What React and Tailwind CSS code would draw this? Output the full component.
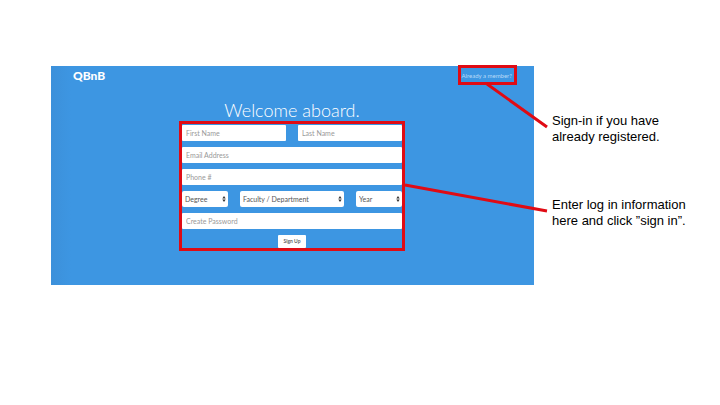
import React from "react";

const field =
  "block h-4 w-full min-w-0 rounded-[1px] bg-white px-1 text-[7px] leading-4 text-gray-600 outline-none placeholder:text-[#999]";

function Field({ label, type = "text" }) {
  return <input type={type} aria-label={label} placeholder={label} className={field} />;
}

function Select({ label, className }) {
  return (
    <div className={`relative ${className}`}>
      <select
        aria-label={label}
        className="block h-4 w-full appearance-none rounded-[2px] bg-white px-[3px] text-[7px] leading-4 text-[#555] outline-none"
      >
        <option>{label}</option>
      </select>
      <svg viewBox="0 0 4 6" className="pointer-events-none absolute top-[5px] right-[2px] h-[6px] w-1 fill-[#333]">
        <path d="M2 0 3.7 2.4H.3zM2 6 .3 3.6h3.4z" />
      </svg>
    </div>
  );
}

function Callout({ className }) {
  return <span aria-hidden="true" className={`pointer-events-none absolute border-3 border-[#e00b14] ${className}`} />;
}

export default function App() {
  return (
    <div className="flex min-h-screen items-start bg-white pt-[66px] pl-[51px] font-['Lato',sans-serif]">
      <section className="relative min-w-0 flex-1 bg-[linear-gradient(to_right,#3c90da,#3d96e2_20px)] pb-[37px]">
        <header className="flex items-start justify-between pt-[3px] pr-[22px] pl-[22px]">
          <span className="text-[12px] leading-[14px] font-black text-white">QBnB</span>
          <a href="#sign-in" className="relative text-[6px] leading-[14px] font-normal text-[#b9daf7]">
            Already a member?
            <Callout className="-top-1 -right-[5px] -bottom-[2px] -left-1" />
          </a>
        </header>
        <main className="pt-4 pr-px">
          <h1 className="text-center text-[18px] leading-[22px] font-light text-white">Welcome aboard.</h1>
          <form
            className="relative mx-auto mt-1 flex w-[220px] flex-col gap-[6px]"
            onSubmit={(e) => e.preventDefault()}
          >
            <div className="grid grid-cols-2 gap-3">
              <Field label="First Name" />
              <Field label="Last Name" />
            </div>
            <Field label="Email Address" type="email" />
            <Field label="Phone #" type="tel" />
            <div className="flex gap-3">
              <Select label="Degree" className="w-[46px]" />
              <Select label="Faculty / Department" className="flex-1" />
              <Select label="Year" className="w-[46px]" />
            </div>
            <Field label="Create Password" type="password" />
            <button type="submit" className="h-[13px] w-7 self-center rounded-[1px] bg-white text-[5px] leading-[13px] font-bold text-[#666]">
              Sign Up
            </button>
            <Callout className="-inset-x-[3px] -top-1 -bottom-[3px]" />
          </form>
        </main>
        <svg
          aria-hidden="true"
          width="500"
          height="219"
          className="pointer-events-none absolute top-0 right-[-17px] stroke-[#e00b14] stroke-3"
        >
          <path d="M436 18 496 61M354 119 496 145" />
        </svg>
      </section>
      <aside className="w-[186px] shrink-0 pt-[47px] pl-[18px] font-['Liberation_Sans',Arial,sans-serif] text-[13px] leading-4 text-black">
        <p>
          Sign-in if you have
          <br />
          already registered.
        </p>
        <p className="mt-[52px]">
          Enter log in information
          <br />
          here and click ”sign in”.
        </p>
      </aside>
    </div>
  );
}
